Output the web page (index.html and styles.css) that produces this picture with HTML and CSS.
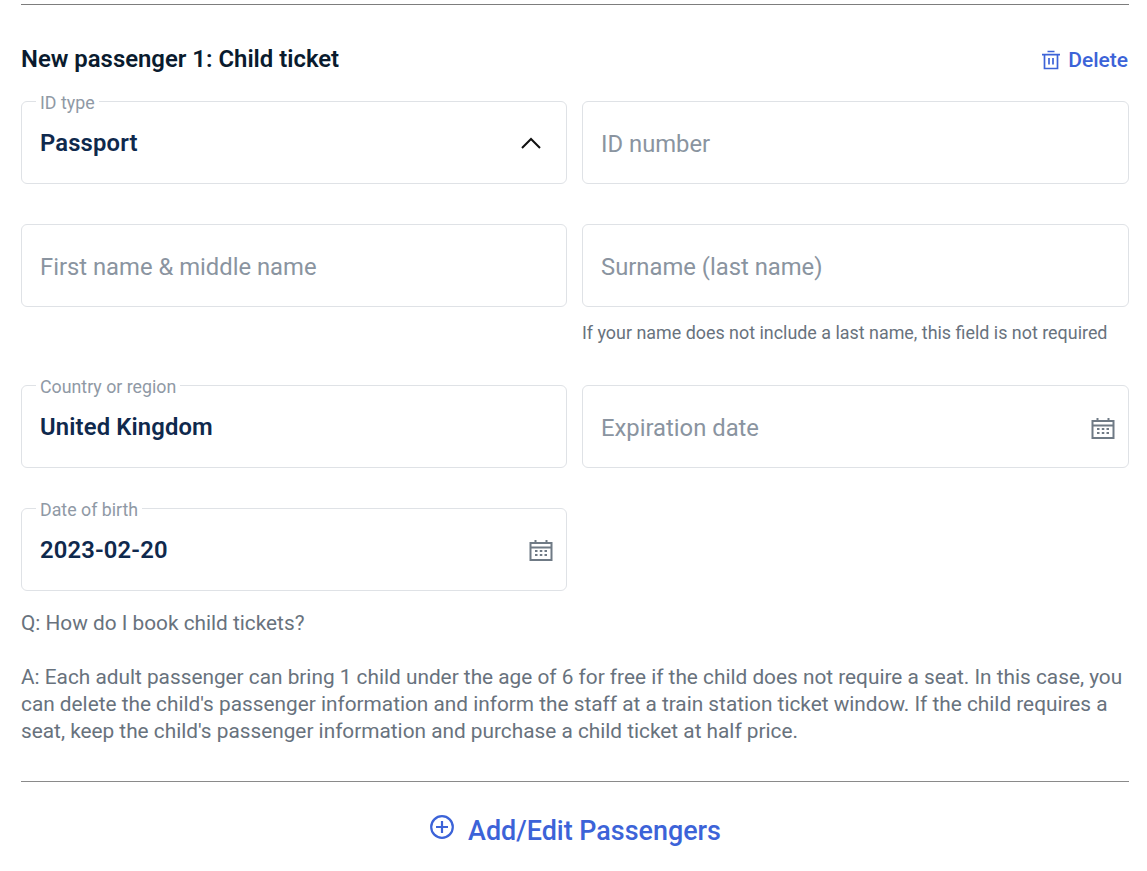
FILE: index.html
```html
<!DOCTYPE html>
<html lang="en">

<head>
  <meta charset="UTF-8">
  <meta name="viewport" content="width=device-width, initial-scale=1.0">
  <title>New passenger</title>
  <link rel="stylesheet" href="styles.css">
</head>

<body>
  <div class="passenger-form">
    <div class="form-header">
      <h2>New passenger 1: Child ticket</h2>
      <a class="delete-link" href="#">
        <svg width="20" height="20" viewBox="0 0 20 20" fill="none" stroke="currentColor" stroke-width="1.7">
          <path d="M1 4.700h18M6.500 1.500h7M3.500 4.700V18.500h13V4.700M8 8v6.500M12 8v6.500" />
        </svg>
        Delete
      </a>
    </div>

    <div class="field-grid">
      <div class="field-cell">
        <div class="field filled">
          <span class="field-label">ID type</span>
          <span class="field-value">Passport</span>
          <svg class="chevron" width="22" height="12" viewBox="0 0 22 12" fill="none" stroke="#111" stroke-width="2">
            <path d="M2 11l9-9 9 9" />
          </svg>
        </div>
      </div>
      <div class="field-cell">
        <div class="field"><span class="field-placeholder">ID number</span></div>
      </div>

      <div class="field-cell">
        <div class="field"><span class="field-placeholder">First name &amp; middle name</span></div>
      </div>
      <div class="field-cell">
        <div class="field"><span class="field-placeholder">Surname (last name)</span></div>
        <p class="field-hint">If your name does not include a last name, this field is not required</p>
      </div>

      <div class="field-cell">
        <div class="field filled">
          <span class="field-label">Country or region</span>
          <span class="field-value">United Kingdom</span>
        </div>
      </div>
      <div class="field-cell">
        <div class="field">
          <span class="field-placeholder">Expiration date</span>
          <svg class="calendar" width="24" height="22" viewBox="0 0 24 22">
            <path fill="none" stroke="#6f7a85" stroke-width="2" d="M1.500 4h21v17h-21zM1.500 8.500h21M6.500 1v4M17.500 1v4" />
            <path fill="#6f7a85" d="M6 11h2.500v2H6zM10.800 11h2.500v2h-2.500zM15.500 11H18v2h-2.500zM6 15h2.500v2H6zM10.800 15h2.500v2h-2.500zM15.500 15H18v2h-2.500z" />
          </svg>
        </div>
      </div>

      <div class="field-cell">
        <div class="field filled">
          <span class="field-label">Date of birth</span>
          <span class="field-value">2023-02-20</span>
          <svg class="calendar" width="24" height="22" viewBox="0 0 24 22">
            <path fill="none" stroke="#6f7a85" stroke-width="2" d="M1.500 4h21v17h-21zM1.500 8.500h21M6.500 1v4M17.500 1v4" />
            <path fill="#6f7a85" d="M6 11h2.500v2H6zM10.800 11h2.500v2h-2.500zM15.500 11H18v2h-2.500zM6 15h2.500v2H6zM10.800 15h2.500v2h-2.500zM15.500 15H18v2h-2.500z" />
          </svg>
        </div>
      </div>
    </div>

    <div class="child-faq">
      <p>Q: How do I book child tickets?</p>
      <p>A: Each adult passenger can bring 1 child under the age of 6 for free if the child does not require a seat. In this case, you can delete the child's passenger information and inform the staff at a train station ticket window. If the child requires a seat, keep the child's passenger information and purchase a child ticket at half price.</p>
    </div>

    <a class="add-passengers" href="#">
      <svg width="26" height="26" viewBox="0 0 26 26" fill="none" stroke="currentColor" stroke-width="2.200">
        <circle cx="13" cy="13" r="10.800" />
        <path d="M7 13h12M13 7v12" />
      </svg>
      <span>Add/Edit Passengers</span>
    </a>
  </div>
</body>

</html>
```

FILE: styles.css
```css
* {
  margin: 0;
  padding: 0;
  box-sizing: border-box;
}

body {
  font-family: Roboto, "Noto Sans", sans-serif;
  background: white;
  color: #0f294d;
  padding: 4px 18px 0 21px;
}

.passenger-form {
  border-top: 1px solid #7d7d7d;
}

.form-header {
  display: flex;
  justify-content: space-between;
  align-items: center;
  height: 96px;
  padding-top: 12px;
}

.form-header h2 {
  font-size: 23.900px;
  font-weight: 600;
  color: #0a1b2e;
}

.delete-link {
  display: flex;
  align-items: center;
  gap: 7px;
  padding-top: 2px;
  padding-right: 1px;
  color: #3c63d8;
  font-size: 21px;
  font-weight: 500;
  text-decoration: none;
}

.field-grid {
  display: grid;
  grid-template-columns: 546px 547px;
  column-gap: 15px;
  row-gap: 40px;
}

.field {
  position: relative;
  display: flex;
  justify-content: space-between;
  align-items: center;
  height: 83px;
  padding: 3px 18px 0 18px;
  border: 1px solid #dfe2e6;
  border-radius: 6px;
  font-size: 23.800px;
}

.field.filled {
  padding-top: 1px;
}

.field-label {
  position: absolute;
  top: -9px;
  left: 14px;
  padding: 0 4px;
  background: white;
  color: #8f99a5;
  font-size: 17.800px;
  line-height: 20px;
}

.field-value {
  font-weight: 600;
  letter-spacing: 0.15px;
  color: #0f294d;
}

.field-placeholder {
  color: #8a94a0;
}

.chevron {
  margin-right: 6px;
}

.calendar {
  margin-right: -5px;
}

.field-hint {
  margin-top: 15px;
  margin-bottom: 1px;
  color: #68727d;
  font-size: 17.900px;
  line-height: 22px;
}

.child-faq {
  margin-top: 19px;
  padding-bottom: 36px;
  border-bottom: 1px solid #8a8a8a;
  color: #68727d;
  font-size: 20.800px;
  line-height: 27px;
}

.child-faq p + p {
  margin-top: 27px;
}

.add-passengers {
  display: flex;
  justify-content: center;
  align-items: flex-start;
  gap: 13px;
  padding-top: 33px;
  color: #3c63d8;
  font-size: 26.900px;
  font-weight: 500;
  text-decoration: none;
}

.add-passengers svg {
  margin-top: -1px;
}
```
